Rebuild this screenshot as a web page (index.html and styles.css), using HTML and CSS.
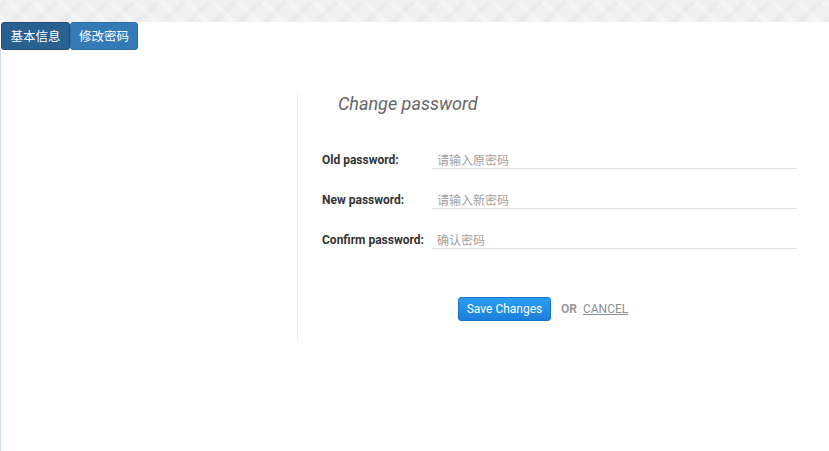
FILE: index.html
```html
<!DOCTYPE html>
<html>
<head>
<meta charset="utf-8">
<link rel="stylesheet" href="styles.css">
</head>
<body>
<div class="topbar"></div>
<div class="tabs">
  <button class="tab tab-active">基本信息</button>
  <button class="tab">修改密码</button>
</div>
<div class="main">
  <div class="panel">
    <h3 class="title">Change password</h3>
    <form class="form">
      <div class="row">
        <label class="label">Old password:</label>
        <input class="input" type="password" placeholder="请输入原密码">
      </div>
      <div class="row">
        <label class="label">New password:</label>
        <input class="input" type="password" placeholder="请输入新密码">
      </div>
      <div class="row">
        <label class="label">Confirm password:</label>
        <input class="input" type="password" placeholder="确认密码">
      </div>
      <div class="actions">
        <button type="button" class="save">Save Changes</button>
        <span class="or">OR</span>
        <a class="cancel" href="#">CANCEL</a>
      </div>
    </form>
  </div>
</div>
</body>
</html>
```
FILE: styles.css
```css
html, body {
  margin: 0;
  padding: 0;
  background: #fff;
  font-family: Roboto, "Noto Sans CJK SC", sans-serif;
  height: 100%;
}
.topbar {
  height: 22px;
  background-color: #f0f0f0;
  background-image:
    repeating-linear-gradient(45deg, rgba(255,255,255,0.25) 0 5px, rgba(0,0,0,0) 5px 18px),
    repeating-linear-gradient(-45deg, rgba(230,230,230,0.5) 0 5px, rgba(0,0,0,0) 5px 18px);
}
.tabs {
  display: flex;
  padding-left: 1px;
  height: 28px;
}
.tab {
  height: 28px;
  width: 69px;
  padding: 0;
  font-family: "Noto Sans CJK SC", sans-serif;
  font-size: 12.5px;
  color: #fff;
  background: #337ab7;
  border: 1px solid #2e6da4;
  border-radius: 3px;
  line-height: 24px;
  cursor: pointer;
}
.tab + .tab {
  width: 68px;
}
.tab-active {
  background: #286090;
  border-color: #204d74;
}
.main {
  border-left: 1px solid #d5dee8;
  height: calc(100% - 50px);
  box-sizing: border-box;
  padding-top: 44px;
}
.panel {
  margin-left: 296px;
  border-left: 1px solid #eeeeee;
  height: 247px;
  box-sizing: border-box;
  padding-top: 1px;
}
.title {
  margin: 0 0 0 40px;
  font-size: 18px;
  font-weight: 400;
  font-style: italic;
  color: #666;
  line-height: 18px;
  height: 34px;
}
.form {
  padding-left: 24px;
}
.row {
  display: flex;
  align-items: flex-end;
  height: 40px;
}
.label {
  width: 110px;
  font-size: 12px;
  font-weight: 700;
  color: #333;
  line-height: 14px;
  padding-bottom: 2px;
}
.input {
  width: 365px;
  height: 24px;
  box-sizing: border-box;
  border: 0;
  border-bottom: 1px solid #dde3ea;
  padding: 8px 5px 0;
  font-family: Roboto, "Noto Sans CJK SC", sans-serif;
  font-size: 12px;
  outline: none;
  background: transparent;
}
.input::placeholder {
  color: #a0a0a0;
}
.actions {
  display: flex;
  align-items: center;
  margin-top: 48px;
  padding-left: 136px;
}
.save {
  height: 24px;
  width: 93px;
  padding: 0;
  font-family: Roboto, sans-serif;
  font-size: 12px;
  color: #fff;
  background: linear-gradient(#2b9ef2, #1a7fdc);
  border: 1px solid #1a74c8;
  border-radius: 3px;
  cursor: pointer;
}
.or {
  margin-left: 10px;
  font-size: 12px;
  font-weight: 700;
  color: #999;
}
.cancel {
  margin-left: 6px;
  font-size: 12px;
  color: #8a8f99;
  text-decoration: underline;
}
```
